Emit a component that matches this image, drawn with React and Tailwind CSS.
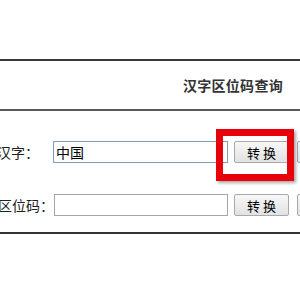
import React from 'react';

const Btn = ({ label }) => (
    <button className="h-[22px] w-[55px] shrink-0 border border-[#a9a9a9] rounded-[2px] bg-gradient-to-b from-[#f8f8f8] to-[#e2e2e2] text-[13px] text-black leading-none">
        {label}
    </button>
);

const App = () => {
    return (
        <div className="w-[300px] h-[290px] bg-white overflow-hidden relative font-['Noto_Sans_CJK_SC',sans-serif]">
            <div className="h-[59px]" />
            <div className="border-t-2 border-b-2 border-t-[#3a3a3a] border-b-[#5a5a5a] h-[52px] flex items-center justify-end pr-[17px]">
                <h2 className="text-[14px] font-bold text-[#333] tracking-[0.3px]">汉字区位码查询</h2>
            </div>
            <div className="border-b-2 border-[#333] h-[123px] flex flex-col">
                <div className="flex items-center h-[22px] mt-[30px] -ml-[3px]">
                    <span className="w-[56px] shrink-0 text-[14px] text-[#222]">汉字：</span>
                    <input
                        readOnly
                        value="中国"
                        className="h-[22px] w-[175px] shrink-0 border border-[#7f9db9] outline-none px-[2px] text-[14px] text-black"
                    />
                    <span className="w-[6px] shrink-0" />
                    <Btn label="转 换" />
                    <span className="w-[8px] shrink-0" />
                    <Btn label="" />
                </div>
                <div className="flex items-center h-[22px] mt-[31px] -ml-[2px]">
                    <span className="w-[56px] shrink-0 text-[14px] text-[#222]">区位码：</span>
                    <input
                        readOnly
                        value=""
                        className="h-[22px] w-[174px] shrink-0 border border-[#a5a5a5] outline-none px-[2px] text-[14px]"
                    />
                    <span className="w-[6px] shrink-0" />
                    <Btn label="转 换" />
                    <span className="w-[8px] shrink-0" />
                    <Btn label="" />
                </div>
            </div>
            <div className="absolute left-[216px] top-[129px] w-[78px] h-[52px] border-[7px] border-[#e8000b] shadow-[2px_2px_3px_rgba(0,0,0,0.35)]" />
        </div>
    );
};

export default App;
